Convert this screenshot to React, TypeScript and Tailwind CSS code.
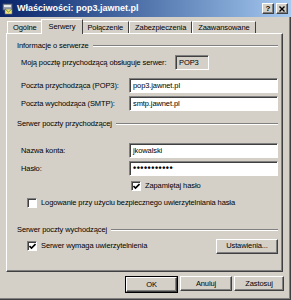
import React from 'react';

const raised =
  'border border-t-white border-l-white border-r-[#404040] border-b-[#404040] shadow-[inset_-1px_-1px_#808080]';
const sunken =
  'border border-t-[#808080] border-l-[#808080] border-r-white border-b-white shadow-[inset_1px_1px_#404040]';

function Check({ checked }: { checked: boolean }) {
  return (
    <div className={`flex h-[10px] w-[10px] shrink-0 items-center justify-center bg-white ${sunken}`}>
      {checked && (
        <svg width="7" height="7" viewBox="0 0 7 7">
          <path d="M0.5 3 L2.5 5 L6.5 1" stroke="#000" strokeWidth="1.6" fill="none" />
        </svg>
      )}
    </div>
  );
}

function Header({ label }: { label: string }) {
  return (
    <div className="flex h-[10px] items-center pl-[10px] pr-[4px]">
      <span className="whitespace-nowrap leading-none">{label}</span>
      <div className="ml-[4px] flex-1 border-t border-b border-t-[#808080] border-b-white" />
    </div>
  );
}

function Field({ label, value, mt }: { label: string; value: string; mt: string }) {
  return (
    <div className={`flex h-[15px] items-center pl-[14px] pr-[4px] ${mt}`}>
      <span className="w-[108px] whitespace-nowrap leading-none">{label}</span>
      <div className={`flex h-full flex-1 items-center bg-white pl-[3px] ${sunken}`}>
        <span className="leading-none">{value}</span>
      </div>
    </div>
  );
}

function TabLabel({ label, active }: { label: string; active?: boolean }) {
  return (
    <div
      className={`relative flex items-center border-l border-t border-r border-t-white border-l-white border-r-[#404040] ${
        active ? '-mx-[2px] z-10 mb-[-1px] h-[15px] bg-[#D4D0C8] px-[7px]' : 'h-[12px] px-[5px]'
      }`}
    >
      <span className="whitespace-nowrap leading-none">{label}</span>
    </div>
  );
}

function Button({ label, wide, isDefault }: { label: string; wide?: string; isDefault?: boolean }) {
  return (
    <div className={isDefault ? 'border border-black' : ''}>
      <div className={`flex h-[15px] items-center justify-center ${raised} ${wide ?? ''}`}>
        <span className="leading-none">{label}</span>
      </div>
    </div>
  );
}

export default function App() {
  return (
    <div className="h-[300px] w-[291px] overflow-hidden bg-[#D4D0C8] font-['Liberation_Sans',Arial,sans-serif] text-[7.5px] tracking-[-0.1px] text-black shadow-[inset_-1px_-1px_#404040,inset_-2px_-2px_#808080]">
      {/* title bar */}
      <div className="flex h-[17px] items-center bg-gradient-to-r from-[#0A246A] to-[#A6CAF0] pl-[2px] pr-[3px]">
        <svg width="12" height="12" viewBox="0 0 12 12" className="shrink-0">
          <rect x="1" y="1" width="9" height="6" fill="#9aa3ad" stroke="#4b5563" strokeWidth="0.8" />
          <rect x="2" y="2" width="7" height="2" fill="#e5e7eb" />
          <rect x="3" y="6" width="7" height="5" fill="#f8e27a" stroke="#6b7280" strokeWidth="0.6" />
          <path d="M3 6 L6.5 9 L10 6" stroke="#3f8f3a" strokeWidth="0.8" fill="none" />
        </svg>
        <span className="ml-[3px] text-[9px] font-bold leading-none tracking-normal text-white">Właściwości: pop3.jawnet.pl</span>
        <div className="ml-auto flex gap-[2px]">
          <div className={`flex h-[11px] w-[12px] items-center justify-center bg-[#D4D0C8] ${raised}`}>
            <span className="text-[8px] font-bold leading-none">?</span>
          </div>
          <div className={`flex h-[11px] w-[12px] items-center justify-center bg-[#D4D0C8] ${raised}`}>
            <svg width="6" height="6" viewBox="0 0 6 6">
              <path d="M0.5 0.5 L5.5 5.5 M5.5 0.5 L0.5 5.5" stroke="#000" strokeWidth="1.4" />
            </svg>
          </div>
        </div>
      </div>

      <div className="px-[6px] pt-[2px]">
        {/* tabs */}
        <div className="flex h-[14px] items-end pl-[1px]">
          <TabLabel label="Ogólne" />
          <TabLabel label="Serwery" active />
          <TabLabel label="Połączenie" />
          <TabLabel label="Zabezpieczenia" />
          <TabLabel label="Zaawansowane" />
        </div>

        {/* panel */}
        <div className="h-[239px] w-[277px] border border-t-white border-l-white border-r-[#404040] border-b-[#404040] pt-[7px] shadow-[inset_-1px_-1px_#808080]">
          <Header label="Informacje o serwerze" />

          <div className="mt-[4px] flex h-[15px] items-center pl-[14px]">
            <span className="w-[154px] whitespace-nowrap leading-none">Moją pocztę przychodzącą obsługuje serwer:</span>
            <div className={`flex h-full w-[34px] items-center pl-[3px] ${sunken}`}>
              <span className="leading-none">POP3</span>
            </div>
          </div>

          <Field label="Poczta przychodząca (POP3):" value="pop3.jawnet.pl" mt="mt-[8px]" />
          <Field label="Poczta wychodząca (SMTP):" value="smtp.jawnet.pl" mt="mt-[3px]" />

          <div className="mt-[8px]">
            <Header label="Serwer poczty przychodzącej" />
          </div>

          <Field label="Nazwa konta:" value="jkowalski" mt="mt-[14px]" />
          <div className="mt-[3px] flex h-[15px] items-center pl-[14px] pr-[4px]">
            <span className="w-[108px] leading-none">Hasło:</span>
            <div className={`flex h-full flex-1 items-center bg-white pl-[3px] ${sunken}`}>
              <span className="text-[9px] font-bold leading-none tracking-[0.5px]">•••••••••••</span>
            </div>
          </div>

          <div className="mt-[5px] flex h-[10px] items-center pl-[124px]">
            <Check checked />
            <span className="ml-[4px] whitespace-nowrap leading-none">Zapamiętaj hasło</span>
          </div>

          <div className="mt-[7px] flex h-[10px] items-center pl-[20px]">
            <Check checked={false} />
            <span className="ml-[4px] whitespace-nowrap leading-none">Logowanie przy użyciu bezpiecznego uwierzytelniania hasła</span>
          </div>

          <div className="mt-[17px]">
            <Header label="Serwer poczty wychodzącej" />
          </div>

          <div className="mt-[3px] flex h-[16px] items-center pl-[20px] pr-[4px]">
            <Check checked />
            <span className="ml-[4px] whitespace-nowrap leading-none">Serwer wymaga uwierzytelnienia</span>
            <div className="ml-auto">
              <Button label="Ustawienia..." wide="w-[62px]" />
            </div>
          </div>
        </div>

        {/* dialog buttons */}
        <div className="mt-[4px] flex justify-end gap-[2px] pr-[1px]">
          <Button label="OK" wide="w-[51px]" isDefault />
          <Button label="Anuluj" wide="w-[52px]" />
          <Button label="Zastosuj" wide="w-[50px]" />
        </div>
      </div>
    </div>
  );
}
